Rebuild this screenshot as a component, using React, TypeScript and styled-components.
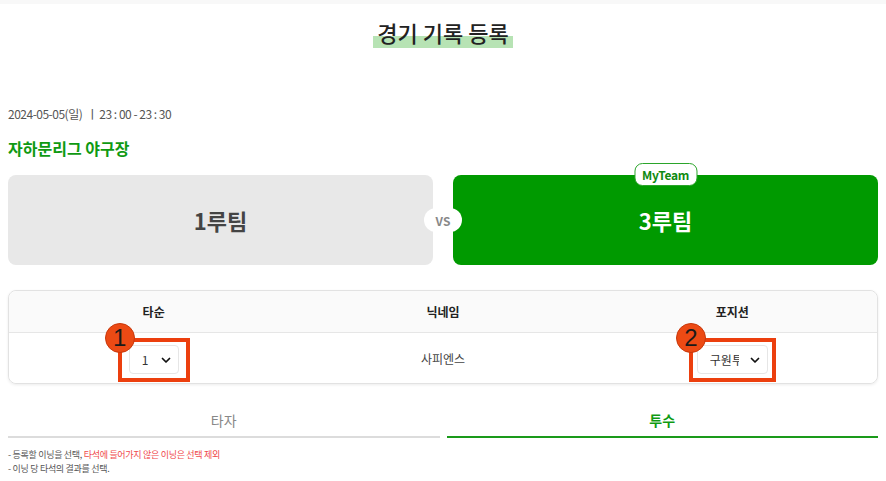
import React from "react";
import styled, { createGlobalStyle } from "styled-components";

const Global = createGlobalStyle`
  html, body { margin: 0; padding: 0; background: #fff; }
  body { font-family: "Noto Sans CJK KR", "Noto Sans", sans-serif; color: #222; }
  * { box-sizing: border-box; }
`;

const TopStrip = styled.div`
  height: 4px;
  background: #f8f8f8;
`;

const Page = styled.div`
  padding: 0 8px;
`;

const TitleWrap = styled.div`
  display: flex;
  justify-content: center;
  padding-top: 12px;
`;

const Title = styled.h1`
  margin: 0;
  font-size: 22px;
  font-weight: 500;
  line-height: 32px;
  color: #222;
  padding: 0 4px;
  background: linear-gradient(to bottom, transparent 0, transparent 20px, #b7e3b4 20px, #b7e3b4 31px);
`;

const DateLine = styled.div`
  margin-top: 57px;
  font-size: 12px;
  line-height: 18px;
  color: #555;
  letter-spacing: -0.5px;
`;

const Venue = styled.div`
  margin-top: 14px;
  font-size: 16px;
  font-weight: 700;
  color: #0f9a12;
  line-height: 22px;
`;

const Teams = styled.div`
  position: relative;
  margin-top: 16px;
  display: grid;
  grid-template-columns: 1fr 1fr;
  gap: 20px;
`;

const TeamCard = styled.div<{ $mine?: boolean }>`
  position: relative;
  height: 90px;
  border-radius: 8px;
  background: ${(p) => (p.$mine ? "#009a00" : "#e8e8e8")};
  color: ${(p) => (p.$mine ? "#fff" : "#444")};
  display: flex;
  align-items: center;
  justify-content: center;
  font-size: 22px;
  font-weight: 700;
`;

const Vs = styled.div`
  position: absolute;
  left: 50%;
  top: 50%;
  transform: translate(-50%, -50%);
  width: 38px;
  height: 24px;
  border-radius: 12px;
  background: #fff;
  color: #888;
  font-size: 12px;
  font-weight: 700;
  display: flex;
  align-items: center;
  justify-content: center;
`;

const Badge = styled.div`
  position: absolute;
  top: -12px;
  left: 50%;
  transform: translateX(-50%);
  height: 23px;
  padding: 0 7px;
  border: 1px solid #2aa52a;
  border-radius: 8px;
  background: #fff;
  color: #0f8a12;
  font-size: 12px;
  font-weight: 700;
  display: flex;
  align-items: center;
  letter-spacing: -0.3px;
`;

const TableCard = styled.div`
  margin-top: 25px;
  border: 1px solid #e2e2e2;
  border-radius: 8px;
  box-shadow: 0 1px 3px rgba(0, 0, 0, 0.08);
`;

const Row = styled.div<{ $head?: boolean }>`
  display: grid;
  grid-template-columns: 1fr 1fr 1fr;
  height: ${(p) => (p.$head ? "42px" : "50px")};
  background: ${(p) => (p.$head ? "#fafafa" : "#fff")};
  border-bottom: ${(p) => (p.$head ? "1px solid #e6e6e6" : "none")};
  border-radius: ${(p) => (p.$head ? "8px 8px 0 0" : "0 0 8px 8px")};
`;

const Cell = styled.div<{ $head?: boolean }>`
  display: flex;
  align-items: center;
  justify-content: center;
  font-size: 12px;
  font-weight: ${(p) => (p.$head ? 700 : 400)};
  color: ${(p) => (p.$head ? "#222" : "#444")};
`;

const Annot = styled.div<{ $px: number }>`
  position: relative;
  border: 4px solid #ec3f0e;
  padding: 3px ${(p) => p.$px}px 4px;
  margin-top: 4px;
`;

const Num = styled.div`
  position: absolute;
  left: -17px;
  top: -19px;
  width: 30px;
  height: 30px;
  border-radius: 50%;
  background: #ec4a14;
  border: 1px solid #c8380b;
  color: #1a1a1a;
  font-family: "Liberation Sans", sans-serif;
  font-size: 24px;
  line-height: 28px;
  text-align: center;
`;

const Select = styled.div<{ $w: number }>`
  width: ${(p) => p.$w}px;
  height: 29px;
  border: 1px solid #e6e6e6;
  border-radius: 4px;
  background: #fff;
  display: flex;
  align-items: center;
  justify-content: space-between;
  padding: 0 6px 0 12px;
  font-size: 12px;
  color: #333;
`;

const SelText = styled.span`
  overflow: hidden;
  white-space: nowrap;
  width: 29px;
  margin-right: 4px;
`;

const Tabs = styled.div`
  margin-top: 20px;
  display: grid;
  grid-template-columns: 1fr 1fr;
  gap: 7px;
`;

const Tab = styled.div<{ $active?: boolean }>`
  height: 34px;
  display: flex;
  align-items: center;
  justify-content: center;
  font-size: 14px;
  font-weight: ${(p) => (p.$active ? 700 : 400)};
  color: ${(p) => (p.$active ? "#0f9a12" : "#888")};
  border-bottom: ${(p) => (p.$active ? "2px solid #1a9a1a" : "2px solid #dcdcdc")};
`;

const Notes = styled.div`
  margin-top: 10px;
  font-size: 9px;
  line-height: 14px;
  color: #555;
  letter-spacing: -0.3px;
`;

const Red = styled.span`
  color: #f0484a;
`;

const Chevron = () => (
  <svg width="12" height="12" viewBox="0 0 24 24" fill="none" stroke="#111" strokeWidth="3.5" strokeLinecap="round" strokeLinejoin="round">
    <polyline points="5 9 12 16 19 9" />
  </svg>
);

export default function App() {
  return (
    <>
      <Global />
      <TopStrip />
      <Page>
        <TitleWrap>
          <Title>경기 기록 등록</Title>
        </TitleWrap>
        <DateLine>2024-05-05(일) &nbsp;ㅣ 23 : 00 - 23 : 30</DateLine>
        <Venue>자하문리그 야구장</Venue>
        <Teams>
          <TeamCard>1루팀</TeamCard>
          <TeamCard $mine>
            <Badge>MyTeam</Badge>
            3루팀
          </TeamCard>
          <Vs>VS</Vs>
        </Teams>
        <TableCard>
          <Row $head>
            <Cell $head>타순</Cell>
            <Cell $head>닉네임</Cell>
            <Cell $head>포지션</Cell>
          </Row>
          <Row>
            <Cell>
              <Annot $px={7}>
                <Num>1</Num>
                <Select $w={50}>
                  <span>1</span>
                  <Chevron />
                </Select>
              </Annot>
            </Cell>
            <Cell>사피엔스</Cell>
            <Cell>
              <Annot $px={4}>
                <Num>2</Num>
                <Select $w={71}>
                  <SelText>구원투수</SelText>
                  <Chevron />
                </Select>
              </Annot>
            </Cell>
          </Row>
        </TableCard>
        <Tabs>
          <Tab>타자</Tab>
          <Tab $active>투수</Tab>
        </Tabs>
        <Notes>
          <div>
            - 등록할 이닝을 선택, <Red>타석에 들어가지 않은 이닝은 선택 제외</Red>
          </div>
          <div>- 이닝 당 타석의 결과를 선택.</div>
        </Notes>
      </Page>
    </>
  );
}
